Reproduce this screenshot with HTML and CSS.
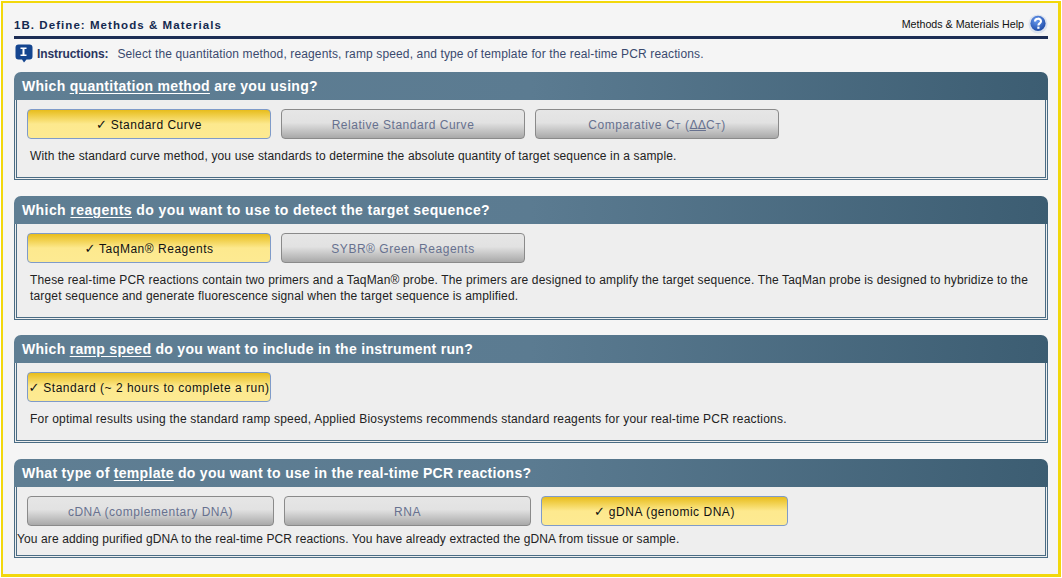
FILE: index.html
```html
<!DOCTYPE html>
<html lang="en">
<head>
<meta charset="utf-8">
<title>Methods &amp; Materials</title>
<link rel="stylesheet" href="styles.css">
</head>
<body>
<div class="frame">
  <header class="title-bar">
    <h1 class="title">1B. Define: Methods &amp; Materials</h1>
    <a class="help">Methods &amp; Materials Help
      <svg class="help-icon" width="20" height="20" viewBox="0 0 20 20">
        <defs><radialGradient id="hb" cx="0.4" cy="0.3" r="0.75"><stop offset="0" stop-color="#6a9bf0"/><stop offset="1" stop-color="#1a47a4"/></radialGradient></defs>
        <circle cx="10" cy="10" r="9.6" fill="#dce3ef"/>
        <circle cx="10" cy="9.4" r="7.6" fill="url(#hb)"/>
        <path d="M7 7.4c0-3.6 6-3.6 6-.2 0 2.2-2.6 2.2-2.6 4.2" fill="none" stroke="#fff" stroke-width="2.1"/>
        <rect x="9.3" y="12.6" width="2.2" height="2.2" fill="#fff"/>
      </svg>
    </a>
  </header>
  <div class="instructions">
    <svg class="info-icon" width="18" height="19" viewBox="0 0 18 19">
      <path d="M3.5 .5h11a3 3 0 0 1 3 3v9a3 3 0 0 1-3 3h-3l-2.500 3-2-3h-3.500a3 3 0 0 1-3-3v-9a3 3 0 0 1 3-3z" fill="#14458f"/>
      <rect x="4.500" y="3" width="8" height="9.500" fill="#14458f"/>
      <path d="M5.500 3.500h6v1.500h-2v5.500h2v1.500h-6v-1.500h2v-5.500h-2z" fill="#fff"/>
    </svg>
    <strong class="instr-label">Instructions:</strong>
    <span class="instr-text">Select the quantitation method, reagents, ramp speed, and type of template for the real-time PCR reactions.</span>
  </div>

  <section class="card card-1">
    <h2 class="card-head">Which <u>quantitation method</u> are you using?</h2>
    <div class="card-body">
      <div class="btn-row">
        <button class="btn on"><span class="check">✓</span> Standard Curve</button>
        <button class="btn">Relative Standard Curve</button>
        <button class="btn">Comparative C<span class="sc">T</span> (<u class="delta">ΔΔ</u>C<span class="sc">T</span>)</button>
      </div>
      <p class="desc">With the standard curve method, you use standards to determine the absolute quantity of target sequence in a sample.</p>
    </div>
  </section>

  <section class="card card-2">
    <h2 class="card-head">Which <u>reagents</u> do you want to use to detect the target sequence?</h2>
    <div class="card-body">
      <div class="btn-row">
        <button class="btn on"><span class="check">✓</span> TaqMan® Reagents</button>
        <button class="btn">SYBR® Green Reagents</button>
      </div>
      <p class="desc">These real-time PCR reactions contain two primers and a TaqMan® probe. The primers are designed to amplify the target sequence. The TaqMan probe is designed to hybridize to the target sequence and generate fluorescence signal when the target sequence is amplified.</p>
    </div>
  </section>

  <section class="card card-3">
    <h2 class="card-head">Which <u>ramp speed</u> do you want to include in the instrument run?</h2>
    <div class="card-body">
      <div class="btn-row">
        <button class="btn on"><span class="check">✓</span> Standard (~ 2 hours to complete a run)</button>
      </div>
      <p class="desc">For optimal results using the standard ramp speed, Applied Biosystems recommends standard reagents for your real-time PCR reactions.</p>
    </div>
  </section>

  <section class="card card-4">
    <h2 class="card-head">What type of <u>template</u> do you want to use in the real-time PCR reactions?</h2>
    <div class="card-body">
      <div class="btn-row">
        <button class="btn wide">cDNA (complementary DNA)</button>
        <button class="btn wide">RNA</button>
        <button class="btn wide on"><span class="check">✓</span> gDNA (genomic DNA)</button>
      </div>
      <p class="desc tight">You are adding purified gDNA to the real-time PCR reactions. You have already extracted the gDNA from tissue or sample.</p>
    </div>
  </section>
</div>
</body>
</html>
```
FILE: styles.css
```css
* { box-sizing: border-box; }
html, body { margin: 0; padding: 0; background: #fff; }
body { width: 1062px; height: 578px; padding: 1px; overflow: hidden; font-family: "Liberation Sans", Arial, sans-serif; }
.frame { width: 1060px; height: 576px; border: solid #f2d80c; border-width: 2px 3px 3px 2px; background: #f5f5f5; padding: 0 10px 0 11px; }
.title-bar { height: 36px; border-bottom: 3px solid #1c2d54; display: flex; justify-content: space-between; align-items: flex-end; padding-bottom: 4px; }
.title { margin: 0; font-size: 11.5px; font-weight: bold; color: #14294f; letter-spacing: 1.06px; line-height: 14px; }
.help { display: flex; align-items: center; gap: 4px; align-self: flex-start; margin-top: 11px; font-size: 10.7px; color: #111; line-height: 14px; }
.help-icon { display: block; }
.instructions { height: 33px; display: flex; align-items: center; font-size: 12px; color: #3a4a6e; padding-bottom: 4px; }
.info-icon { display: block; margin-left: 1px; margin-right: 4px; }
.instr-label { color: #2a3560; letter-spacing: -0.1px; margin-right: 9px; }
.instr-text { letter-spacing: 0.13px; }
.card { margin-bottom: 16px; }
.card-head { margin: 0; height: 28px; padding-left: 8px; border-radius: 7px 7px 0 0; background: linear-gradient(90deg, #5f7e93 0%, #5b7b91 50%, #3c5d72 100%); color: #fff; font-size: 14px; font-weight: bold; letter-spacing: 0.3px; line-height: 28px; }
.card-head u { text-underline-offset: 2px; }
.card-2 .card-head { letter-spacing: 0.41px; }
.card-body { border: 3px double #4a6c84; border-top: 0; background: #eee; padding: 9px 10px 0; }
.card-1 .card-body { height: 80px; }
.card-2 { margin-bottom: 15px; }
.card-2 .card-body { height: 96px; }
.card-3 .card-body { height: 80px; }
.card-4 .card-body { height: 71px; }
.btn-row { display: flex; gap: 10px; }
.btn { width: 244px; height: 30px; padding: 1px 0 0; border: 1px solid #8a8a8a; border-radius: 4px; background: linear-gradient(180deg, #e6e6e6 0%, #e2e2e2 45%, #a9a9a9 100%); color: #67718f; font-family: inherit; font-size: 12px; letter-spacing: 0.52px; }
.btn.wide { width: 247px; }
.btn.on { border-color: #7f9bc9; background: linear-gradient(180deg, #e8bd1c 0%, #fde98e 50%, #fdea92 100%); color: #111; }
.check { font-family: "DejaVu Sans", sans-serif; font-size: 13px; line-height: 12px; letter-spacing: 0; }
.sc { font-size: 9px; }
.delta { font-family: "DejaVu Sans", sans-serif; font-size: 12px; letter-spacing: 0; }
.desc { margin: 9px 0 0 3px; font-size: 12px; line-height: 16px; color: #222; letter-spacing: 0.145px; }
.card-2 .desc { letter-spacing: 0.16px; }
.card-3 .desc { letter-spacing: 0.21px; }
.desc.tight { margin: 5px 0 0 -10px; letter-spacing: 0.11px; }
```
